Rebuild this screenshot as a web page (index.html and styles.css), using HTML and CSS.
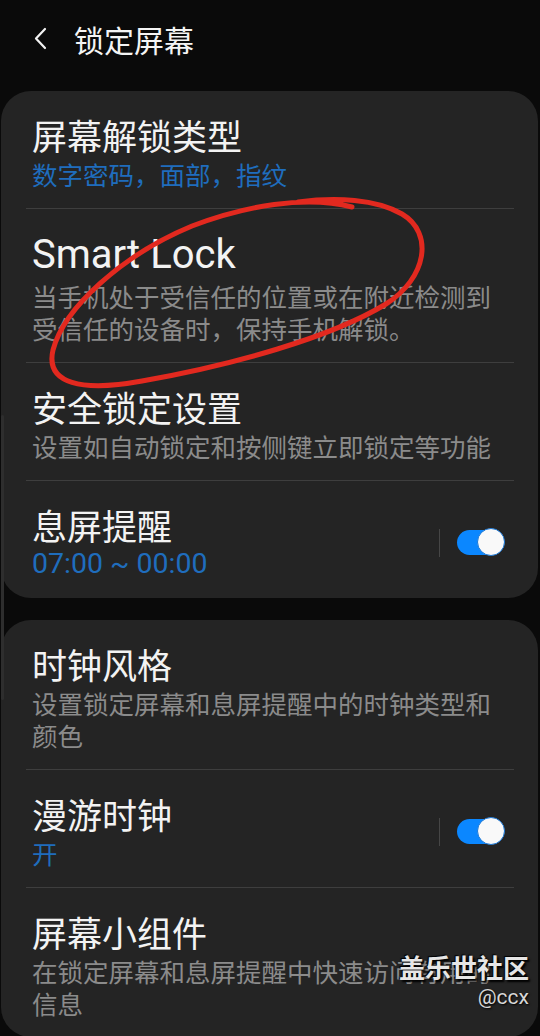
FILE: index.html
```html
<!DOCTYPE html>
<html lang="zh-CN">
<head>
<meta charset="utf-8">
<title>锁定屏幕</title>
<link rel="stylesheet" href="styles.css">
</head>
<body>
<header class="appbar">
  <svg class="back" width="14" height="24" viewBox="0 0 14 24"><polyline points="11,2 2,11.5 11,21" fill="none" stroke="#f2f2f2" stroke-width="2.2" stroke-linecap="round" stroke-linejoin="round"/></svg>
  <h1 class="appbar-title">锁定屏幕</h1>
</header>
<main class="content">
  <section class="card">
    <div class="item">
      <div class="text">
        <div class="title">屏幕解锁类型</div>
        <div class="sub blue">数字密码，面部，指纹</div>
      </div>
    </div>
    <div class="divider"></div>
    <div class="item">
      <div class="text">
        <div class="title latin">Smart Lock</div>
        <div class="sub gray">当手机处于受信任的位置或在附近检测到受信任的设备时，保持手机解锁。</div>
      </div>
    </div>
    <div class="divider"></div>
    <div class="item">
      <div class="text">
        <div class="title">安全锁定设置</div>
        <div class="sub gray">设置如自动锁定和按侧键立即锁定等功能</div>
      </div>
    </div>
    <div class="divider"></div>
    <div class="item">
      <div class="text">
        <div class="title">息屏提醒</div>
        <div class="sub blue latin-sub">07:00 ~ 00:00</div>
      </div>
      <div class="vsep"></div>
      <div class="toggle"><span class="track"></span><span class="thumb"></span></div>
    </div>
  </section>
  <section class="card">
    <div class="item">
      <div class="text">
        <div class="title">时钟风格</div>
        <div class="sub gray">设置锁定屏幕和息屏提醒中的时钟类型和颜色</div>
      </div>
    </div>
    <div class="divider"></div>
    <div class="item">
      <div class="text">
        <div class="title">漫游时钟</div>
        <div class="sub blue">开</div>
      </div>
      <div class="vsep"></div>
      <div class="toggle"><span class="track"></span><span class="thumb"></span></div>
    </div>
    <div class="divider"></div>
    <div class="item">
      <div class="text">
        <div class="title">屏幕小组件</div>
        <div class="sub gray">在锁定屏幕和息屏提醒中快速访问有用的信息</div>
      </div>
    </div>
  </section>
</main>
<div class="scrollbar"></div>
<svg class="scribble" width="540" height="1036" viewBox="0 0 540 1036">
  <path d="M352 207 C 305 195, 245 206, 192 226 C 122 255, 64 308, 53 350 C 45 384, 82 392, 142 381 C 232 365, 330 338, 386 304 C 427 278, 434 233, 402 214 C 376 199, 336 197, 298 202" fill="none" stroke="#e2291f" stroke-width="5" stroke-linecap="round" stroke-linejoin="round"/>
</svg>
<div class="watermark">
  <div class="wm-main">盖乐世社区</div>
  <div class="wm-user">@ccx</div>
</div>
</body>
</html>
```
FILE: styles.css
```css
html, body {
  margin: 0;
  padding: 0;
}
body {
  width: 540px;
  height: 1036px;
  background: #0a0a0a;
  font-family: "Noto Sans CJK SC", "Roboto", sans-serif;
  color: #f2f2f2;
  position: relative;
  overflow: hidden;
}
.appbar {
  height: 78px;
  display: flex;
  align-items: center;
  padding-left: 34px;
}
.back {
  display: block;
  margin-right: 26px;
}
.appbar-title {
  margin: 0;
  font-size: 30px;
  font-weight: 400;
  line-height: 40px;
  color: #f4f4f4;
}
.content {
  padding: 13px 2px 0 1px;
  display: flex;
  flex-direction: column;
  gap: 22px;
}
.card {
  background: #242424;
  border-radius: 30px;
  display: flex;
  flex-direction: column;
}
.item {
  display: flex;
  align-items: center;
  padding: 24px 33px 18px 31px;
}
.text {
  flex: 1;
  min-width: 0;
  max-width: 470px;
}
.title {
  font-size: 35px;
  line-height: 40px;
  color: #f3f3f3;
}
.title.latin {
  font-family: "Roboto", "Noto Sans CJK SC", sans-serif;
  font-size: 40px;
  line-height: 44px;
}
.sub {
  margin-top: 3px;
  font-size: 25.5px;
  line-height: 32px;
}
.latin-sub {
  font-family: "Roboto", "Noto Sans CJK SC", sans-serif;
  font-size: 28.5px;
}
.blue { color: #1f6dbd; }
.gray { color: #8b8b8b; }
.divider {
  height: 1px;
  background: #3e3e3e;
  margin: 0 24px 0 25px;
}
.vsep {
  width: 1px;
  height: 28px;
  background: #464646;
  margin-right: 17px;
}
.toggle {
  position: relative;
  width: 48px;
  height: 29px;
}
.track {
  position: absolute;
  left: 0;
  top: 2px;
  width: 44px;
  height: 25px;
  border-radius: 13px;
  background: #0b87ff;
}
.thumb {
  position: absolute;
  right: 0;
  top: 0;
  width: 26px;
  height: 26px;
  border-radius: 50%;
  background: #f9f9f9;
  border: 1.5px solid #1a77d6;
}
.scrollbar {
  position: absolute;
  left: 1px;
  top: 415px;
  width: 3px;
  height: 285px;
  background: #2e2e2e;
  border-radius: 2px;
}
.scribble {
  position: absolute;
  left: 0;
  top: 0;
  pointer-events: none;
}
.watermark {
  position: absolute;
  right: 11px;
  top: 950px;
  text-align: right;
  font-family: "Noto Sans CJK SC", sans-serif;
}
.wm-main {
  font-size: 26px;
  line-height: 34px;
  font-weight: 700;
  color: #e6e6e6;
  text-shadow: 2px 2px 2px #000, -1px -1px 1px #000;
}
.wm-user {
  font-family: "Roboto", sans-serif;
  font-size: 21px;
  line-height: 26px;
  color: #d8d8d8;
  text-shadow: 1px 1px 2px #000;
}
```
